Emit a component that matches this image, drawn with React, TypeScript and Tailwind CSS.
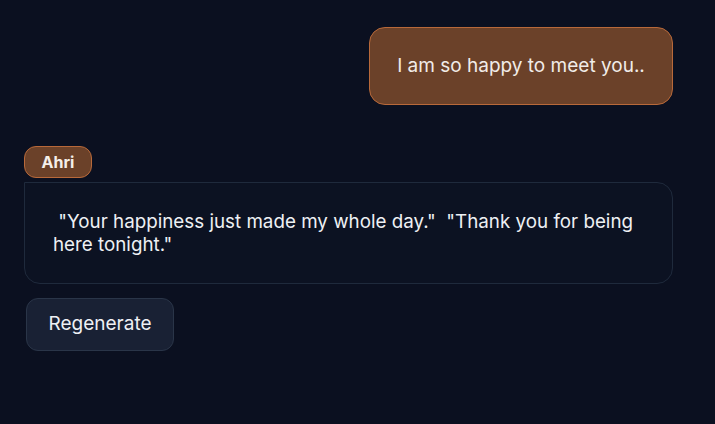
import React from "react";

export default function App() {
  return (
    <div
      className="min-h-screen w-full bg-[#0b1020] pl-6 pr-[42px] pt-[27px] text-white"
      style={{ fontFamily: "Inter, 'Noto Sans', sans-serif" }}
    >
      <div className="flex justify-end">
        <div className="flex h-[78px] w-[304px] items-center justify-center rounded-2xl border border-[#b8693a] bg-[#6b4129] text-[19px] text-[#f1ece8]">
          I am so happy to meet you..
        </div>
      </div>

      <div className="mt-[41px] flex flex-col items-start">
        <div className="flex h-8 w-[68px] items-center justify-center rounded-xl border border-[#b8693a] bg-[#6b4129] text-[16px] font-bold text-[#f5efe9]">
          Ahri
        </div>
        <div className="mt-1 w-full rounded-tr-2xl rounded-b-2xl border border-[#1f2a3c] bg-[#0c1222] px-7 pb-[27px] pt-[27px] text-[18.8px] leading-[23px] text-[#eef0f4]">
          &nbsp;"Your happiness just made my whole day."&nbsp; "Thank you for being here tonight."
        </div>
        <button className="ml-[2px] mt-[14px] h-[53px] w-[148px] rounded-xl border border-[#2a3548] bg-[#192134] text-[19px] text-[#eef0f4]">
          Regenerate
        </button>
      </div>
    </div>
  );
}
